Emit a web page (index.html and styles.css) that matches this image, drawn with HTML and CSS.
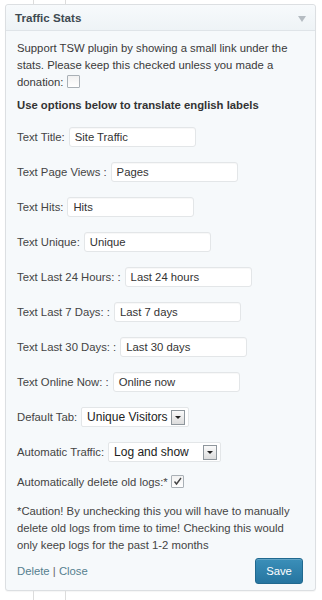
FILE: index.html
```html
<!DOCTYPE html>
<html>
<head>
<meta charset="utf-8">
<link rel="stylesheet" href="styles.css">
</head>
<body>
<div class="strip top"><div class="tab"></div></div>
<div class="widget">
  <div class="head">
    <span class="title">Traffic Stats</span>
    <span class="arrow"></span>
  </div>
  <div class="inside">
    <p class="intro">Support TSW plugin by showing a small link under the stats. Please keep this checked unless you made a donation: <span class="cb"></span></p>
    <p class="bold">Use options below to translate english labels</p>
    <div class="row"><label>Text Title:</label><span class="inp">Site Traffic</span></div>
    <div class="row"><label>Text Page Views :</label><span class="inp">Pages</span></div>
    <div class="row"><label>Text Hits:</label><span class="inp">Hits</span></div>
    <div class="row"><label>Text Unique:</label><span class="inp">Unique</span></div>
    <div class="row"><label>Text Last 24 Hours: :</label><span class="inp">Last 24 hours</span></div>
    <div class="row"><label>Text Last 7 Days: :</label><span class="inp">Last 7 days</span></div>
    <div class="row"><label>Text Last 30 Days: :</label><span class="inp">Last 30 days</span></div>
    <div class="row"><label>Text Online Now: :</label><span class="inp">Online now</span></div>
    <div class="row"><label>Default Tab:</label><span class="sel sel1"><span class="val">Unique Visitors</span><span class="btn"></span></span></div>
    <div class="row"><label>Automatic Traffic:</label><span class="sel sel2"><span class="val">Log and show</span><span class="btn"></span></span></div>
    <p class="auto">Automatically delete old logs:* <span class="cb checked"><svg width="9" height="9" viewBox="0 0 9 9"><path d="M1.5 4.5 L3.5 7 L8 1" fill="none" stroke="#444" stroke-width="1.4"/></svg></span></p>
    <p class="caution">*Caution! By unchecking this you will have to manually delete old logs from time to time! Checking this would only keep logs for the past 1-2 months</p>
    <div class="foot">
      <span class="links"><a>Delete</a> | <a>Close</a></span>
      <span class="save">Save</span>
    </div>
  </div>
</div>
<div class="strip bottom"><div class="tab"></div></div>
</body>
</html>
```
FILE: styles.css
```css
html, body { margin: 0; padding: 0; background: #fff; }
body { font-family: "Liberation Sans", Arial, sans-serif; font-size: 11.3px; color: #3a3a3a; }
.strip { padding-left: 33px; }
.strip.top { height: 4px; }
.strip.bottom { height: 9px; }
.strip .tab { width: 31px; height: 100%; border-left: 1px solid #dcdcdc; border-right: 1px solid #dcdcdc; }
.widget {
  margin-left: 5px; width: 309px;
  border: 1px solid #dcdfe2; border-radius: 3px;
  background: #f6f9fb;
  box-shadow: 0 1px 1px rgba(0,0,0,0.04);
}
.head {
  height: 25px; display: flex; align-items: center; justify-content: space-between;
  padding: 0 9px 0 9px;
  border-bottom: 1px solid #dfe4e8;
  background: linear-gradient(#f7fafc, #eef3f6);
  border-radius: 3px 3px 0 0;
}
.title { font-weight: bold; color: #3f4a52; font-size: 11.6px; }
.arrow { width: 0; height: 0; border-left: 4px solid transparent; border-right: 4px solid transparent; border-top: 6px solid #b5bcc2; margin-top: 2px; }
.inside { padding: 9px 11px 6px 11px; }
p { margin: 0; line-height: 17px; }
.bold { font-weight: bold; margin-top: 6px; color: #333; }
.cb { display: inline-block; width: 11px; height: 11px; border: 1px solid #a9b0b6; background: linear-gradient(#f1f1f1, #fff); vertical-align: -2px; border-radius: 1px; position: relative; }
.cb svg { position: absolute; left: 1px; top: 1px; }
.row { display: flex; align-items: center; height: 20px; margin-top: 15px; }
.bold + .row { margin-top: 13px; }
.row label { color: #444; margin-right: 4px; }
.inp {
  width: 120px; height: 18px; line-height: 18px; padding-left: 5px;
  background: #fff; border: 1px solid #e3e6e8; border-radius: 3px; color: #333;
  box-shadow: inset 0 1px 1px rgba(0,0,0,0.03);
}
.sel { display: flex; align-items: center; height: 18px; background: #fff; border: 1px solid #e3e6e8; border-radius: 2px; padding: 0 3px 0 5px; justify-content: space-between; color: #222; font-size: 12px; }
.sel1 { width: 98px; }
.sel2 { width: 103px; }
.btn { width: 12px; height: 13px; border: 1px solid #8e969c; background: linear-gradient(#fafafa, #dcdcdc); position: relative; }
.btn::after { content: ""; position: absolute; left: 3px; top: 5px; border-left: 3px solid transparent; border-right: 3px solid transparent; border-top: 3px solid #222; }
.auto { margin-top: 12px; color: #444; }
.caution { margin-top: 12px; color: #444; }
.foot { display: flex; justify-content: space-between; align-items: center; margin-top: 4px; height: 26px; }
.links { color: #666; }
.links a { color: #55808f; }
.save {
  width: 46px; height: 24px; line-height: 24px; text-align: center;
  color: #fff; border-radius: 3px; margin-right: 1px;
  background: linear-gradient(#3b8fb9, #2675a0); border: 1px solid #21698f;
  box-shadow: inset 0 1px 0 rgba(255,255,255,0.2);
}
```
